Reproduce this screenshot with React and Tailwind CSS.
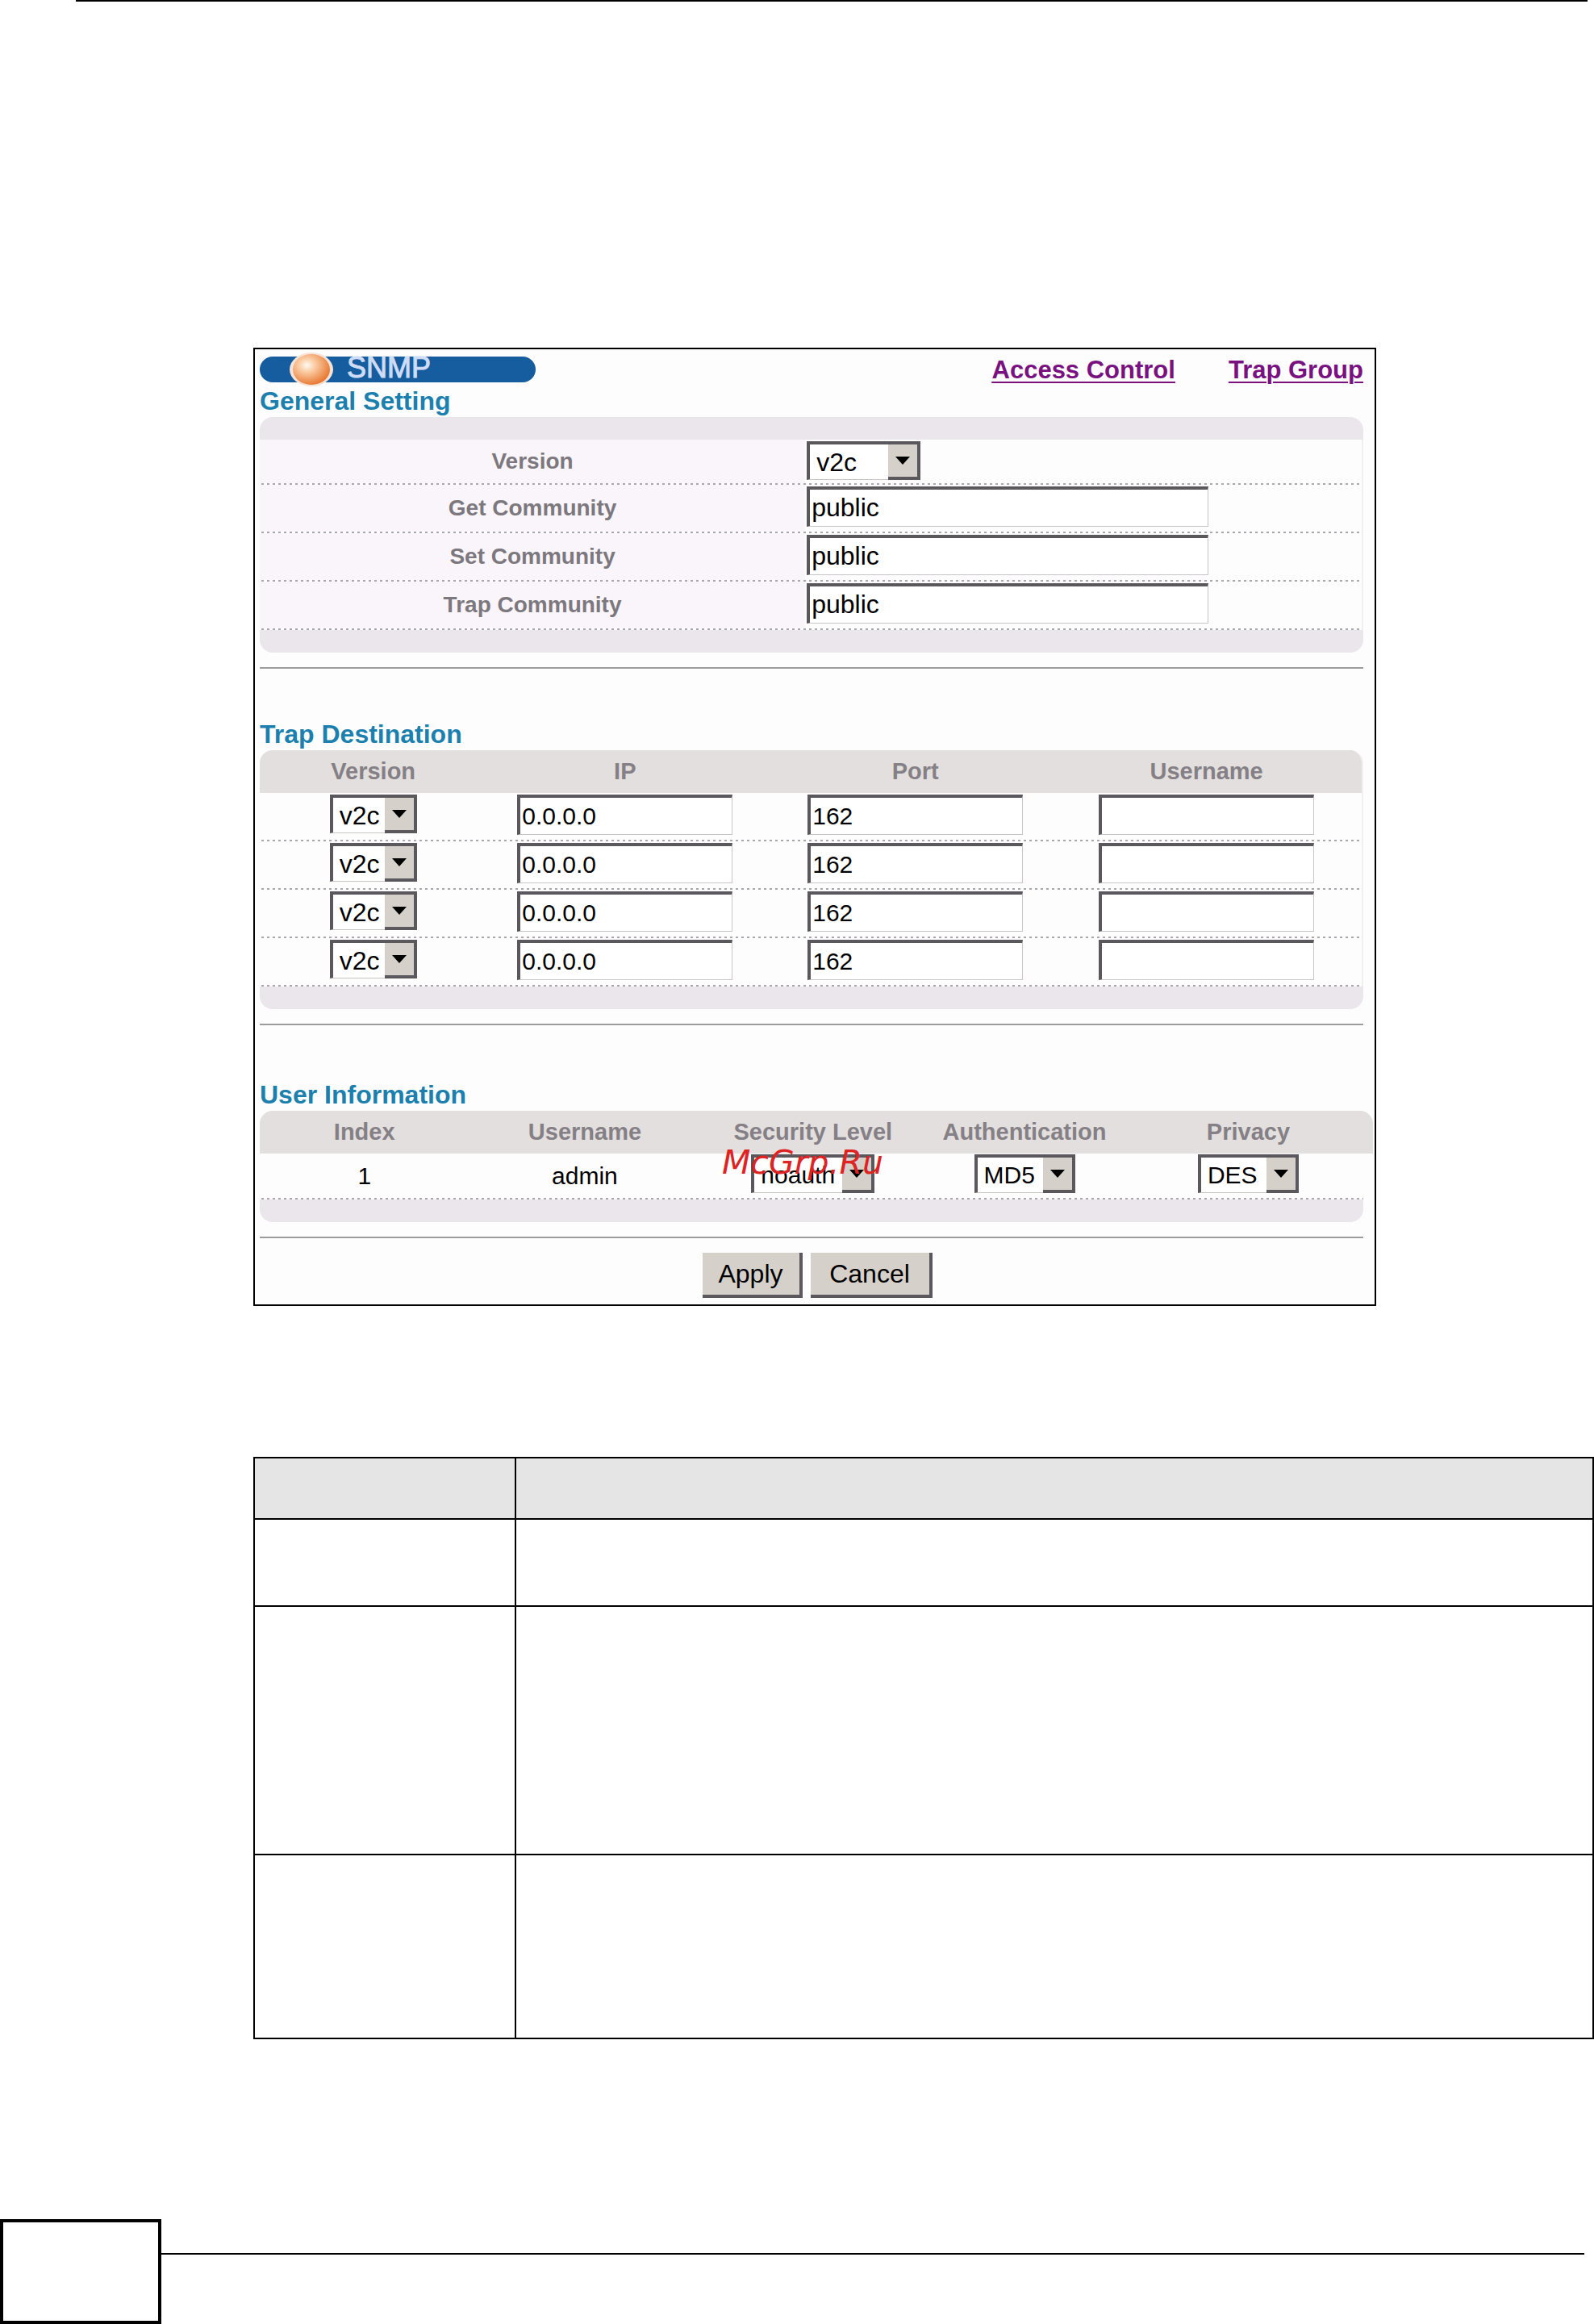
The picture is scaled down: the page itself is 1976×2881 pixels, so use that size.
import React from "react";
import { useState } from "react";

const trapRows = [1, 2, 3, 4];

const Select = ({ label, options, className, id }) => {
  const [value, setValue] = useState(options[0]);
  return (
    <span className={`relative inline-block align-top ${className}`}>
      <select
        id={id}
        aria-label={label}
        value={value}
        onChange={(e) => setValue(e.target.value)}
        className="block w-full h-12 appearance-none bg-white text-black leading-10 pl-2 border-t-4 border-l-4 border-b border-[#5a585c] border-b-[#c8c4c0]"
      >
        {options.map((option) => (
          <option key={option}>{option}</option>
        ))}
      </select>
      <span className="pointer-events-none absolute right-0 top-0 h-12 w-10 border-t-4 border-r-4 border-b-4 border-[#5a585c] bg-[#d5d1ca] flex items-center justify-center">
        <svg width="18" height="10" viewBox="0 0 18 10">
          <path d="M0 0h18L9 10z" fill="#000" />
        </svg>
      </span>
    </span>
  );
};

const TextBox = ({ label, initial, className, id }) => {
  const [value, setValue] = useState(initial);
  return (
    <input
      type="text"
      id={id}
      aria-label={label}
      value={value}
      onChange={(e) => setValue(e.target.value)}
      className={`block h-[50px] bg-white text-black pl-[2px] border-t-4 border-l-4 border-r border-b border-t-[#5a585c] border-l-[#5a585c] border-r-[#c8c4c8] border-b-[#c8c4c8] ${className}`}
    />
  );
};

const Dots = () => (
  <div className="h-[2px] bg-[repeating-linear-gradient(90deg,transparent_0px,transparent_2px,#aaa6ae_2px,#aaa6ae_5px,transparent_5px,transparent_7px)]" />
);

const TableEnd = () => (
  <div>
    <div className="h-[28px] rounded-b-2xl bg-[#eae6eb]" />
    <hr className="mt-[18px] border-t-2 border-[#9c9a9c]" />
  </div>
);

const Title = ({ children }) => (
  <h2 className="font-bold text-[32px] leading-[40px] text-[#1c80ae]">
    {children}
  </h2>
);

const SettingRow = ({ label, id, height, children }) => (
  <div>
    <div className={`flex ${height}`}>
      <label
        htmlFor={id}
        className="w-[49.5%] shrink-0 flex items-center justify-center bg-[#f9f5fb] font-bold text-[28px] text-[#7c787e]"
      >
        {label}
      </label>
      <div className="pl-[2px] pt-[2px] grow">{children}</div>
    </div>
    <Dots />
  </div>
);

const headRow = "bg-[#e2dfde] text-[29px] text-[#858085]";

const App = () => {
  return (
    <main className="bg-white font-['Liberation_Sans',Arial,sans-serif]">
      <hr className="ml-[94px] mr-2 border-t-2 border-black" />

      <section className="mt-[429px] ml-[314px] mr-[270px] border-2 border-black bg-[#fdfdfd] pl-[6px] pr-[14px] pb-2">
        <header className="flex items-start justify-between h-[44px] pt-1">
          <div className="flex items-center h-[42px] w-[342px] relative">
            <div className="h-8 w-full rounded-full bg-[#165d9f]">
              <h1 className="pl-[108px] text-4xl leading-7 font-normal text-[#cfdcf7] [-webkit-text-stroke:1px_#cfdcf7]">
                SNMP
              </h1>
            </div>
            <svg
              width="54"
              height="42"
              viewBox="0 0 54 42"
              className="absolute left-[37px] top-0"
            >
              <defs>
                <radialGradient id="ball" cx="0.38" cy="0.36" r="0.65">
                  <stop offset="0" stopColor="#fffaf2" />
                  <stop offset="0.35" stopColor="#fbcba2" />
                  <stop offset="1" stopColor="#e87a35" />
                </radialGradient>
              </defs>
              <ellipse cx="27" cy="21" rx="27" ry="21" fill="#f6e3d8" />
              <ellipse cx="27" cy="21" rx="23" ry="19" fill="url(#ball)" />
            </svg>
          </div>
          <nav className="flex gap-[66px] font-bold text-[31px] leading-[44px] text-[#7a1180] underline decoration-2 underline-offset-4">
            <a href="#access">Access Control</a>
            <a href="#trap">Trap Group</a>
          </nav>
        </header>

        <Title>General Setting</Title>
        <div className="h-[28px] rounded-t-2xl bg-[#eae6eb]" />
        <div className="border-r-2 border-[#f1eff2] text-[32px]">
          <SettingRow label="Version" id="version" height="h-[54px]">
            <Select id="version" options={["v2c", "v3", "v3v2c"]} className="w-[141px]" />
          </SettingRow>
          <SettingRow label="Get Community" id="get" height="h-[58px]">
            <TextBox id="get" initial="public" className="w-[498px]" />
          </SettingRow>
          <SettingRow label="Set Community" id="set" height="h-[58px]">
            <TextBox id="set" initial="public" className="w-[498px]" />
          </SettingRow>
          <SettingRow label="Trap Community" id="trapc" height="h-[58px]">
            <TextBox id="trapc" initial="public" className="w-[498px]" />
          </SettingRow>
        </div>
        <TableEnd />

        <div className="mt-[61px]">
          <Title>Trap Destination</Title>
          <div className="rounded-t-2xl overflow-hidden border-r-2 border-[#f1eff2]">
            <table className="w-full table-fixed">
              <thead>
                <tr className={`h-[53px] ${headRow}`}>
                  <th className="w-[20.6%]">Version</th>
                  <th className="w-[25.1%]">IP</th>
                  <th className="w-[27.6%]">Port</th>
                  <th className="pr-5">Username</th>
                </tr>
              </thead>
              <tbody>
                {trapRows.map((row) => (
                  <tr
                    key={row}
                    className="h-[60px] text-[30px] bg-[repeating-linear-gradient(90deg,transparent_0px,transparent_2px,#aaa6ae_2px,#aaa6ae_5px,transparent_5px,transparent_7px)] bg-[length:100%_2px] bg-bottom bg-no-repeat"
                  >
                    <td className="text-center align-top pt-[2px]">
                      <Select label={`Version ${row}`} options={["v2c", "v1", "v3"]} className="w-[108px] text-[32px]" />
                    </td>
                    <td className="align-top pt-[2px]">
                      <TextBox label={`IP ${row}`} initial="0.0.0.0" className="w-[267px] mx-auto" />
                    </td>
                    <td className="align-top pt-[2px]">
                      <TextBox label={`Port ${row}`} initial="162" className="w-[267px] mx-auto" />
                    </td>
                    <td className="align-top pt-[2px] pr-5">
                      <TextBox label={`Username ${row}`} initial="" className="w-[267px] mx-auto" />
                    </td>
                  </tr>
                ))}
              </tbody>
            </table>
          </div>
          <TableEnd />
        </div>

        <div className="mt-[66px]">
          <Title>User Information</Title>
          {/* this table is a little wider than the others */}
          <div className="relative -mr-3">
            <div className="rounded-t-2xl overflow-hidden">
              <table className="w-full table-fixed">
                <thead>
                  <tr className={`h-[53px] ${headRow}`}>
                    <th className="w-[18.8%]">Index</th>
                    <th className="w-[20.8%]">Username</th>
                    <th className="w-[20.2%]">Security Level</th>
                    <th className="w-[17.8%]">Authentication</th>
                    <th>Privacy</th>
                  </tr>
                </thead>
                <tbody>
                  <tr className="h-[55px] text-center text-[30px] text-black">
                    <td>1</td>
                    <td>admin</td>
                    <td className="align-top pt-px">
                      <Select label="Security Level" options={["noauth", "auth", "priv"]} className="w-[153px]" />
                    </td>
                    <td className="align-top pt-px">
                      <Select label="Authentication" options={["MD5", "SHA"]} className="w-[125px]" />
                    </td>
                    <td className="align-top pt-px">
                      <Select label="Privacy" options={["DES", "AES"]} className="w-[125px]" />
                    </td>
                  </tr>
                </tbody>
              </table>
            </div>
            <p className="absolute left-[573px] top-[40px] font-['DejaVu_Sans',sans-serif] italic text-[41px] leading-[48px] text-[#dd2323] whitespace-nowrap pointer-events-none">
              McGrp.Ru
            </p>
          </div>
          <Dots />
          <TableEnd />
        </div>

        <div className="mt-[18px] pl-[14px] flex justify-center gap-[10px] text-[32px] text-black">
          <button
            type="button"
            className="w-[124px] h-[56px] bg-[#d5d1ca] border-r-4 border-b-4 border-[#5a585c]"
          >
            Apply
          </button>
          <button
            type="button"
            className="w-[151px] h-[56px] bg-[#d5d1ca] border-r-4 border-b-4 border-[#5a585c]"
          >
            Cancel
          </button>
        </div>
      </section>

      <section className="mt-[187px] ml-[314px]">
        <table className="w-full border-separate border-spacing-0 border-t-2 border-l-2 border-black">
          <thead>
            <tr className="h-[76px] bg-[#e5e5e5]">
              <td className="w-[324px] border-r-2 border-b-2 border-black"></td>
              <td className="border-r-2 border-b-2 border-black"></td>
            </tr>
          </thead>
          <tbody>
            <tr className="h-[108px]">
              <td className="border-r-2 border-b-2 border-black"></td>
              <td className="border-r-2 border-b-2 border-black"></td>
            </tr>
            <tr className="h-[308px]">
              <td className="border-r-2 border-b-2 border-black"></td>
              <td className="border-r-2 border-b-2 border-black"></td>
            </tr>
            <tr className="h-[228px]">
              <td className="border-r-2 border-b-2 border-black"></td>
              <td className="border-r-2 border-b-2 border-black"></td>
            </tr>
          </tbody>
        </table>
      </section>

      <footer className="mt-[223px] flex items-start">
        <div className="w-[200px] h-[130px] shrink-0 border-4 border-black" />
        <hr className="grow mt-[42px] mr-3 border-t-2 border-black" />
      </footer>
    </main>
  );
};

export default App;
